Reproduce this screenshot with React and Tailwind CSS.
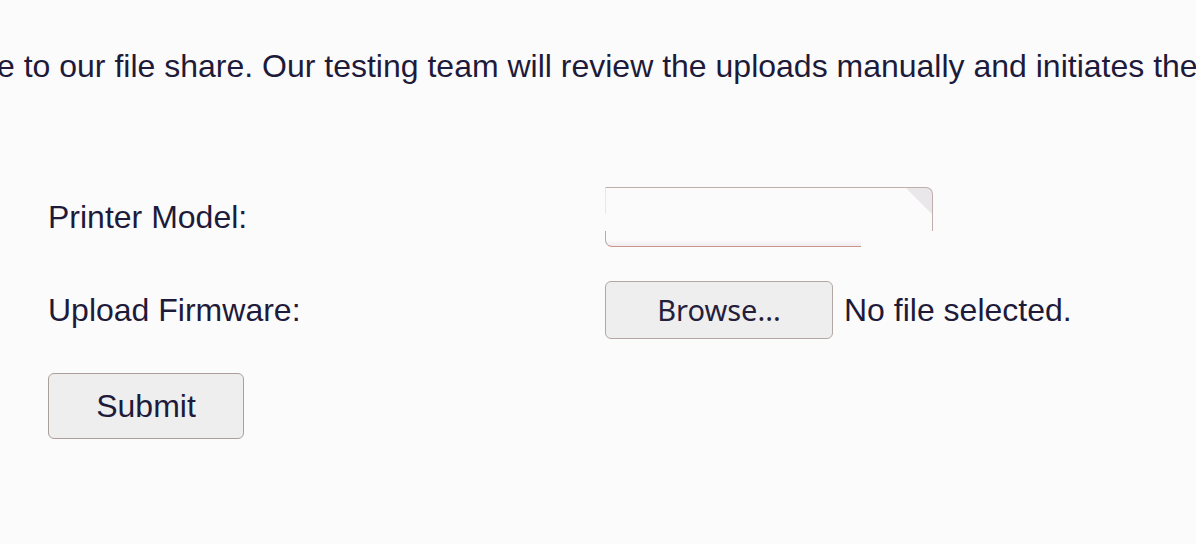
import React from 'react';

export default function App() {
  const font = { fontFamily: '"Liberation Sans", Arial, sans-serif' };

  return (
    <div
      className="w-[1196px] h-[544px] overflow-hidden bg-[#fcfbfc] text-[#1e1b3a] text-[32px]"
      style={font}
    >
      {/* Intro text, cut off at both sides like the capture */}
      <p className="pt-[46px] ml-[-3px] whitespace-nowrap leading-[40px]">
        e to our file share. Our testing team will review the uploads manually and initiates the
      </p>

      {/* Form */}
      <form className="pl-[48px] pt-[101px] grid grid-cols-[557px_1fr] gap-y-[34px] items-center">
        <label className="leading-[36px]">Printer Model:</label>
        <div className="w-[328px] h-[60px] flex flex-col">
          <div className="h-[44px] w-full border-t border-r border-l border-[#bfaeab] border-l-transparent rounded-tr-[7px] bg-[linear-gradient(225deg,#e9e7e9_0,#e9e7e9_18px,transparent_19px)]">
            <input type="text" className="w-full h-full bg-transparent outline-none" />
          </div>
          <div className="flex-1 w-[256px] border-b border-l border-[#c9958a] rounded-bl-[7px] border-l-[#b7aaa8] bg-[linear-gradient(to_bottom,transparent_60%,#eeecee_100%)]" />
        </div>

        <label className="leading-[36px]">Upload Firmware:</label>
        <div className="flex items-center gap-[11px]">
          <button
            type="button"
            className="w-[228px] h-[58px] rounded-[6px] border border-[#b3a7a5] bg-[#efeeef] text-[29px] text-[#24203a]"
            style={{ fontFamily: '"Noto Sans", "Open Sans", sans-serif' }}
          >
            Browse...
          </button>
          <span className="leading-[36px]">No file selected.</span>
        </div>

        <div className="col-span-2">
          <button
            type="submit"
            className="w-[196px] h-[66px] rounded-[6px] border border-[#ab9f9c] bg-[#efeeef] text-[32px] text-[#1e1b3a]"
          >
            Submit
          </button>
        </div>
      </form>
    </div>
  );
}
